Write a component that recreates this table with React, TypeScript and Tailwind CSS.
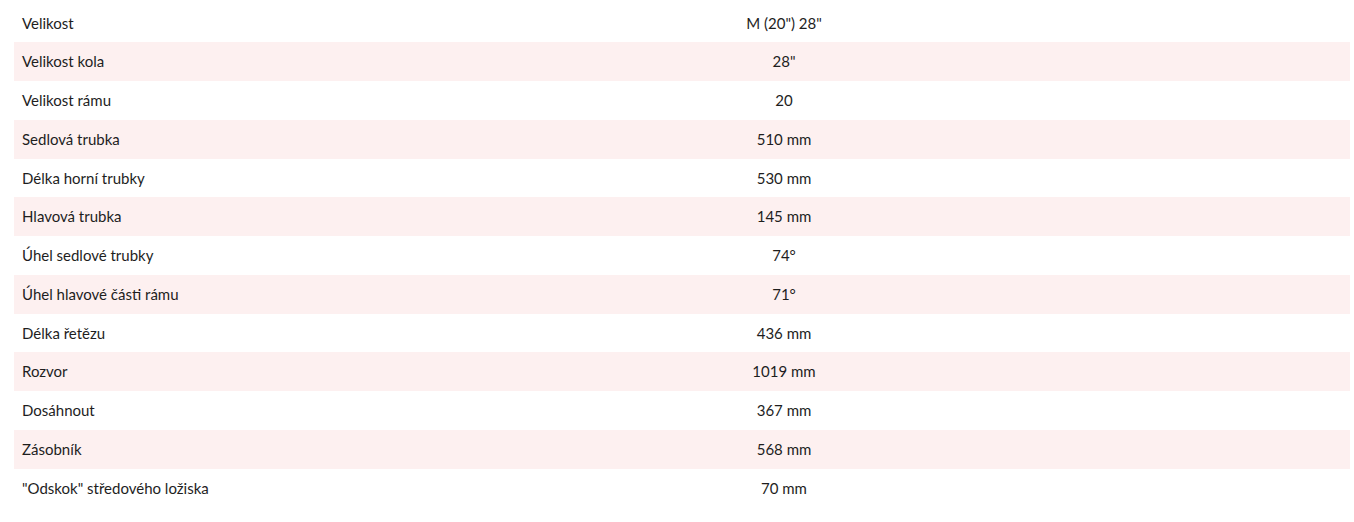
const rows: [string, string][] = [
  ["Velikost", 'M (20") 28"'],
  ["Velikost kola", '28"'],
  ["Velikost rámu", "20"],
  ["Sedlová trubka", "510 mm"],
  ["Délka horní trubky", "530 mm"],
  ["Hlavová trubka", "145 mm"],
  ["Úhel sedlové trubky", "74°"],
  ["Úhel hlavové části rámu", "71°"],
  ["Délka řetězu", "436 mm"],
  ["Rozvor", "1019 mm"],
  ["Dosáhnout", "367 mm"],
  ["Zásobník", "568 mm"],
  ['"Odskok" středového ložiska', "70 mm"],
];

export default function App() {
  return (
    <div className="bg-white w-full min-h-[522px] pt-[3.6px] pl-[14px] pr-[4px] font-['Lato',sans-serif] text-[15px] text-[#1e1e1e]">
      <table className="w-full border-collapse">
        <tbody>
          {rows.map(([label, value], i) => (
            <tr key={label} className={i % 2 === 1 ? "bg-[#fdf0f0]" : "bg-white"}>
              <td className="h-[38.75px] w-[204px] pl-2 text-left align-middle">{label}</td>
              <td className="h-[38.75px] text-center align-middle">{value}</td>
            </tr>
          ))}
        </tbody>
      </table>
    </div>
  );
}
